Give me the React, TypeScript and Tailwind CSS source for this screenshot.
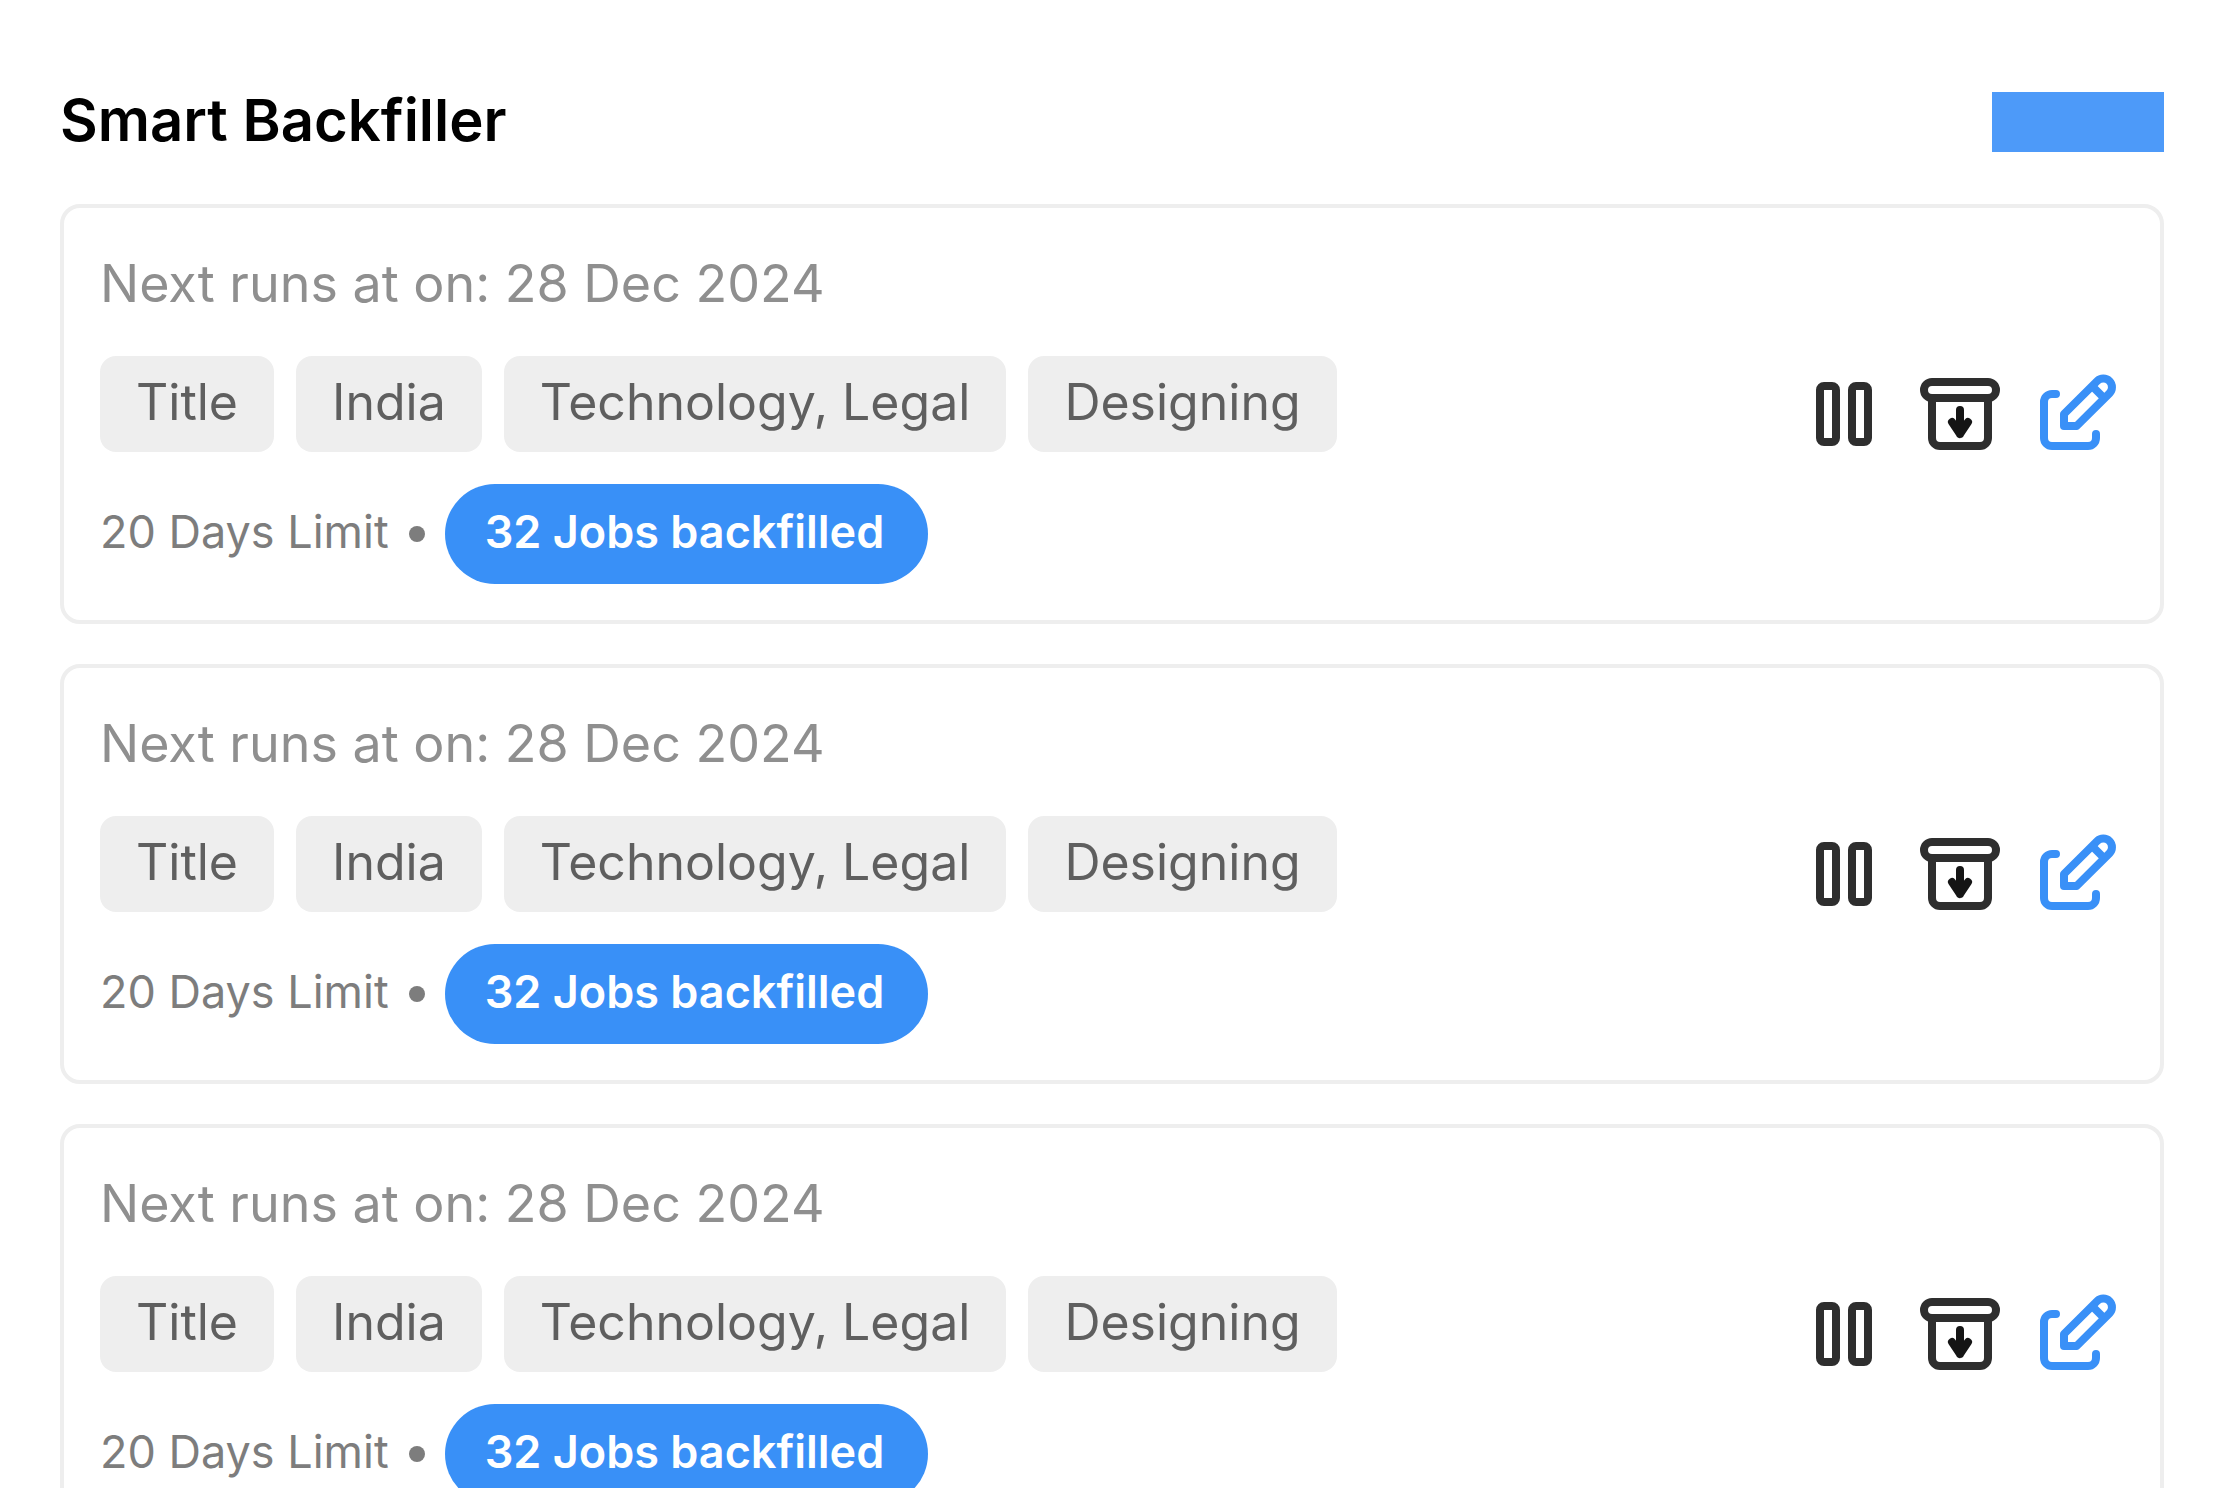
import type { ReactNode } from 'react'

type Job = {
  id: number
  nextRun: string
  tags: string[]
  limit: string
  backfilled: string
}

const tags = ['Title', 'India', 'Technology, Legal', 'Designing']

const jobs: Job[] = [1, 2, 3].map((id) => ({
  id,
  nextRun: '28 Dec 2024',
  tags,
  limit: '20 Days Limit',
  backfilled: '32 Jobs backfilled',
}))

function Icon({ children }: { children: ReactNode }) {
  return (
    <svg
      className="size-24"
      viewBox="0 0 96 96"
      fill="none"
      stroke="currentColor"
      strokeWidth="8"
      strokeLinecap="round"
      strokeLinejoin="round"
      aria-hidden="true"
    >
      {children}
    </svg>
  )
}

function PauseIcon() {
  return (
    <Icon>
      <rect x="24" y="20" width="16" height="56" rx="4" />
      <rect x="56" y="20" width="16" height="56" rx="4" />
    </Icon>
  )
}

function ArchiveIcon() {
  return (
    <Icon>
      <rect x="12" y="16" width="72" height="16" rx="8" />
      <path d="M20 34V72a8 8 0 0 0 8 8H68a8 8 0 0 0 8-8V34" />
      <path d="M48 44V68M40 56L48 68L56 56" stroke="#151515" />
    </Icon>
  )
}

function EditIcon() {
  return (
    <Icon>
      <path d="M28 28H24a8 8 0 0 0-8 8V72a8 8 0 0 0 8 8H60a8 8 0 0 0 8-8V68" />
      <path d="M36 48L69.2 15a8.65 8.65 0 0 1 12.2 12.3L48.6 60H36Z" />
      <path d="M64 20L76 32" strokeLinecap="butt" />
    </Icon>
  )
}

function JobCard({ job }: { job: Job }) {
  return (
    <li className="flex items-center justify-between rounded-[20px] border-4 border-[#eeeeee] p-9">
      <div className="flex flex-col gap-8">
        <p className="text-[52px] leading-[80px] text-[#8f8f8f]">Next runs at on: {job.nextRun}</p>
        <ul className="flex gap-[22px]">
          {job.tags.map((tag) => (
            <li
              key={tag}
              className="rounded-2xl bg-[#eeeeee] px-9 pt-2.5 pb-3.5 text-[50px] leading-[72px] text-[#5f5f5f]"
            >
              {tag}
            </li>
          ))}
        </ul>
        <div className="flex items-center">
          <span className="pb-1 text-[45px] leading-[64px] text-[#7d7d7d]">{job.limit}</span>
          <span className="mx-5 size-4 rounded-full bg-[#7d7d7d]" />
          <span className="rounded-full bg-[#3990f7] pt-4 pr-11 pb-5 pl-10 text-[45px] leading-[64px] font-semibold text-white">
            {job.backfilled}
          </span>
        </div>
      </div>
      <div className="flex gap-5 text-[#2e2e2e]">
        <button type="button" aria-label="Pause">
          <PauseIcon />
        </button>
        <button type="button" aria-label="Archive">
          <ArchiveIcon />
        </button>
        <button type="button" aria-label="Edit" className="text-[#3990f7]">
          <EditIcon />
        </button>
      </div>
    </li>
  )
}

export default function App() {
  return (
    <main className="h-screen overflow-hidden bg-white px-15 pt-20 font-['Inter',sans-serif]">
      <header className="mb-10 flex items-center justify-between">
        <h1 className="pb-1 text-[58px] leading-[80px] font-semibold text-black">Smart Backfiller</h1>
        <button type="button" aria-label="Add backfill" className="h-15 w-43 bg-[#4d9af9]" />
      </header>
      <ul className="flex flex-col gap-10">
        {jobs.map((job) => (
          <JobCard key={job.id} job={job} />
        ))}
      </ul>
    </main>
  )
}
